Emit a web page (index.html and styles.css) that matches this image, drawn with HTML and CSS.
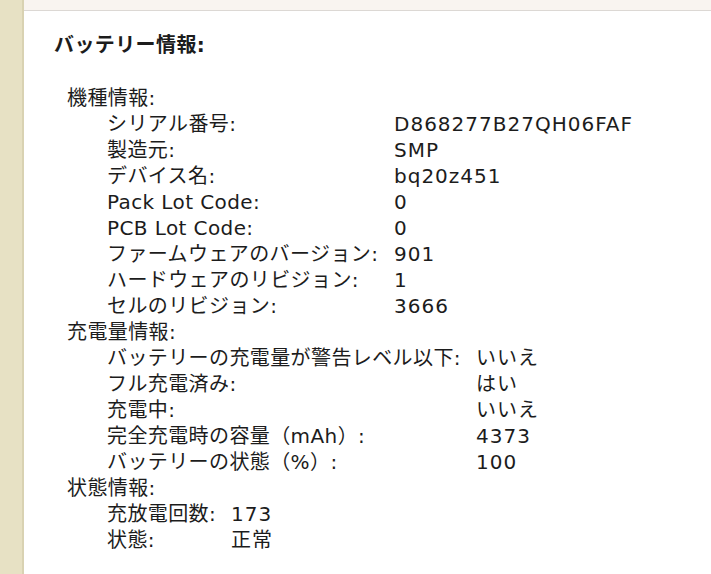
FILE: index.html
```html
<!DOCTYPE html>
<html lang="ja">

<head>
    <meta charset="UTF-8">
    <meta name="viewport" content="width=device-width, initial-scale=1.0">
    <title>バッテリー情報</title>
    <link rel="stylesheet" href="styles.css">
</head>

<body>
    <div class="window">
        <div class="sidebar"></div>
        <div class="main">
            <div class="toolbar"></div>
            <div class="content">
                <div class="title">バッテリー情報:</div>

                <div class="group">
                    <div class="heading">機種情報:</div>
                    <div class="fields model">
                        <div>シリアル番号:</div><div class="value">D868277B27QH06FAF</div>
                        <div>製造元:</div><div class="value">SMP</div>
                        <div>デバイス名:</div><div class="value">bq20z451</div>
                        <div>Pack Lot Code:</div><div class="value">0</div>
                        <div>PCB Lot Code:</div><div class="value">0</div>
                        <div>ファームウェアのバージョン:</div><div class="value">901</div>
                        <div>ハードウェアのリビジョン:</div><div class="value">1</div>
                        <div>セルのリビジョン:</div><div class="value">3666</div>
                    </div>
                </div>

                <div class="group">
                    <div class="heading">充電量情報:</div>
                    <div class="fields charge">
                        <div>バッテリーの充電量が警告レベル以下:</div><div class="value">いいえ</div>
                        <div>フル充電済み:</div><div class="value">はい</div>
                        <div>充電中:</div><div class="value">いいえ</div>
                        <div>完全充電時の容量（mAh）:</div><div class="value">4373</div>
                        <div>バッテリーの状態（%）:</div><div class="value">100</div>
                    </div>
                </div>

                <div class="group">
                    <div class="heading">状態情報:</div>
                    <div class="fields status">
                        <div>充放電回数:</div><div class="value">173</div>
                        <div>状態:</div><div class="value">正常</div>
                    </div>
                </div>
            </div>
        </div>
    </div>
</body>

</html>
```

FILE: styles.css
```css
body {
    margin: 0;
    font-family: "DejaVu Sans", "Noto Sans CJK JP", sans-serif;
    color: #1c1c1c;
    background-color: white;
}

.window {
    width: 100vw;
    height: 100vh;
    display: flex;
    overflow: hidden;
}

.sidebar {
    width: 22px;
    flex-shrink: 0;
    background-color: #e7e1c4;
    border-right: 2px solid #d9d2b2;
}

.main {
    flex: 1;
    display: flex;
    flex-direction: column;
}

.toolbar {
    height: 10px;
    background-color: #f9f4f0;
    border-bottom: 1px solid #dcd8d4;
}

.content {
    padding: 21px 0 0 30px;
    font-size: 20px;
    line-height: 26px;
    letter-spacing: 0.4px;
}

.title {
    font-weight: bold;
    margin-bottom: 27px;
}

.group {
    padding-left: 13px;
}

.fields {
    display: grid;
    padding-left: 40px;
}

.fields .value {
    letter-spacing: 1px;
}

.fields.model {
    grid-template-columns: 287px auto;
}

.fields.charge {
    grid-template-columns: 369px auto;
}

.fields.status {
    grid-template-columns: 124px auto;
}
```
